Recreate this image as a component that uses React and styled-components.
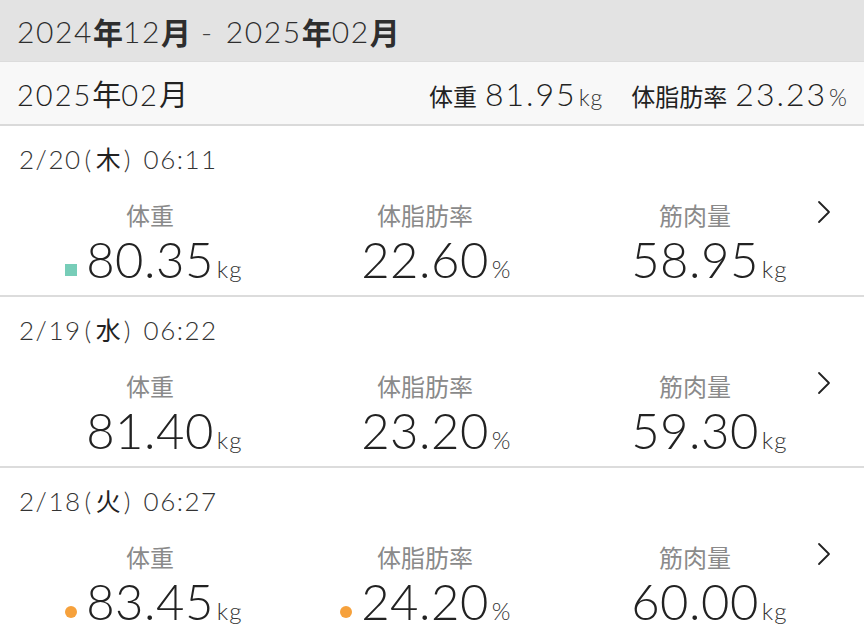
import React from "react";
import styled, { createGlobalStyle } from "styled-components";

const GlobalStyle = createGlobalStyle`
  html, body {
    margin: 0;
    padding: 0;
    background: #ffffff;
  }
  body {
    font-family: Lato, "Noto Sans CJK JP", sans-serif;
    color: #2b2b2b;
  }
`;

const records = [
  {
    date: "2/20",
    day: "木",
    time: "06:11",
    weight: { value: "80.35", mark: "square" },
    fat: { value: "22.60" },
    muscle: { value: "58.95" },
  },
  {
    date: "2/19",
    day: "水",
    time: "06:22",
    weight: { value: "81.40" },
    fat: { value: "23.20" },
    muscle: { value: "59.30" },
  },
  {
    date: "2/18",
    day: "火",
    time: "06:27",
    weight: { value: "83.45", mark: "dot" },
    fat: { value: "24.20", mark: "dot" },
    muscle: { value: "60.00" },
  },
];

function Metric({ label, value, unit, mark }) {
  return (
    <MetricCol>
      <MetricLabel>{label}</MetricLabel>
      <ValueRow>
        <MarkSlot>{mark && <Mark kind={mark} />}</MarkSlot>
        <Num>{value}</Num>
        <Unit>{unit}</Unit>
      </ValueRow>
    </MetricCol>
  );
}

function Chevron() {
  return (
    <svg width="16" height="24" viewBox="0 0 16 24">
      <path
        d="M3 2 L13 12 L3 22"
        fill="none"
        stroke="#222"
        strokeWidth="1.8"
        strokeLinecap="round"
        strokeLinejoin="round"
      />
    </svg>
  );
}

export default function App() {
  return (
    <Page>
      <GlobalStyle />
      <RangeBar>
        2024<Kanji>年</Kanji>12<Kanji>月</Kanji>
        <Dash>-</Dash>
        2025<Kanji>年</Kanji>02<Kanji>月</Kanji>
      </RangeBar>

      <MonthBar>
        <MonthTitle>
          2025<Kanji>年</Kanji>02<Kanji>月</Kanji>
        </MonthTitle>
        <Summary>
          <SumItem>
            <SumLabel>体重</SumLabel>
            <SumNum>81.95</SumNum>
            <SumUnit>kg</SumUnit>
          </SumItem>
          <SumItem>
            <SumLabel>体脂肪率</SumLabel>
            <SumNum>23.23</SumNum>
            <SumUnit>%</SumUnit>
          </SumItem>
        </Summary>
      </MonthBar>

      {records.map((r) => (
        <Record key={r.date}>
          <DateLine>
            {r.date}
            <Paren>(</Paren>
            <Kanji>{r.day}</Kanji>
            <Paren>)</Paren> {r.time}
          </DateLine>
          <Metrics>
            <Metric label="体重" value={r.weight.value} unit="kg" mark={r.weight.mark} />
            <Metric label="体脂肪率" value={r.fat.value} unit="%" mark={r.fat.mark} />
            <Metric label="筋肉量" value={r.muscle.value} unit="kg" mark={r.muscle.mark} />
            <ChevronCell>
              <Chevron />
            </ChevronCell>
          </Metrics>
        </Record>
      ))}
    </Page>
  );
}

const Page = styled.div`
  width: 864px;
  height: 630px;
  overflow: hidden;
  background: #fff;
`;

const Kanji = styled.span`
  font-family: "Noto Sans CJK JP", sans-serif;
`;

const RangeBar = styled.div`
  height: 61px;
  box-sizing: border-box;
  background: #e3e3e3;
  display: flex;
  align-items: center;
  padding-left: 17px;
  font-size: 30px;
  font-weight: 300;
  letter-spacing: 1.6px;
  color: #2e2e2e;
  ${Kanji} {
    font-weight: 700;
    letter-spacing: 0;
  }
`;

const Dash = styled.span`
  margin: 0 12px 0 10px;
  color: #444;
`;

const MonthBar = styled.div`
  height: 65px;
  box-sizing: border-box;
  background: #f8f8f8;
  border-top: 1px solid #dcdcdc;
  border-bottom: 2px solid #dadada;
  display: flex;
  align-items: center;
  justify-content: space-between;
  padding: 0 16px 0 17px;
`;

const MonthTitle = styled.div`
  font-size: 29px;
  font-weight: 300;
  letter-spacing: 2px;
  color: #222;
  ${Kanji} {
    font-weight: 400;
    letter-spacing: 0;
  }
`;

const Summary = styled.div`
  display: flex;
  align-items: baseline;
  gap: 28px;
`;

const SumItem = styled.div`
  display: flex;
  align-items: baseline;
`;

const SumLabel = styled.span`
  font-family: "Noto Sans CJK JP", sans-serif;
  font-size: 24px;
  color: #222;
  margin-right: 8px;
`;

const SumNum = styled.span`
  font-size: 32px;
  font-weight: 300;
  letter-spacing: 2px;
  color: #222;
`;

const SumUnit = styled.span`
  font-size: 23px;
  font-weight: 300;
  margin-left: 2px;
  letter-spacing: 1px;
  color: #333;
`;

const Record = styled.div`
  height: 171px;
  box-sizing: border-box;
  border-bottom: 2px solid #dcdcdc;
  padding: 15px 0 0 14px;
`;

const DateLine = styled.div`
  font-size: 26px;
  font-weight: 300;
  color: #333;
  padding-left: 5px;
  letter-spacing: 1.5px;
  line-height: 34px;
  ${Kanji} {
    font-size: 25px;
    font-weight: 400;
    color: #222;
    letter-spacing: 0;
  }
`;

const Paren = styled.span`
  margin: 0 3px;
`;

const Metrics = styled.div`
  display: grid;
  grid-template-columns: 272px 278px 262px 1fr;
  margin-top: 24px;
`;

const MetricCol = styled.div`
  display: flex;
  flex-direction: column;
  align-items: stretch;
`;

const MetricLabel = styled.div`
  font-family: "Noto Sans CJK JP", sans-serif;
  text-align: center;
  font-size: 24px;
  line-height: 30px;
  color: #8a8a8a;
`;

const ValueRow = styled.div`
  display: grid;
  grid-template-columns: 1fr auto 1fr;
  align-items: baseline;
  margin-top: 3px;
  line-height: 52px;
`;

const MarkSlot = styled.div`
  display: flex;
  justify-content: flex-end;
  align-self: center;
  padding-right: 9px;
  padding-top: 12px;
`;

const Mark = styled.span`
  display: block;
  width: 12px;
  height: 12px;
  background: ${(p) => (p.kind === "square" ? "#77cdb8" : "#f6a13c")};
  border-radius: ${(p) => (p.kind === "square" ? "0" : "50%")};
`;

const Num = styled.span`
  font-size: 49px;
  font-weight: 300;
  letter-spacing: 0.5px;
  color: #222;
`;

const Unit = styled.span`
  font-size: 24px;
  font-weight: 300;
  color: #333;
  padding-left: 3px;
  letter-spacing: 1px;
`;

const ChevronCell = styled.div`
  margin-left: -10px;
  padding-top: 0;
`;
